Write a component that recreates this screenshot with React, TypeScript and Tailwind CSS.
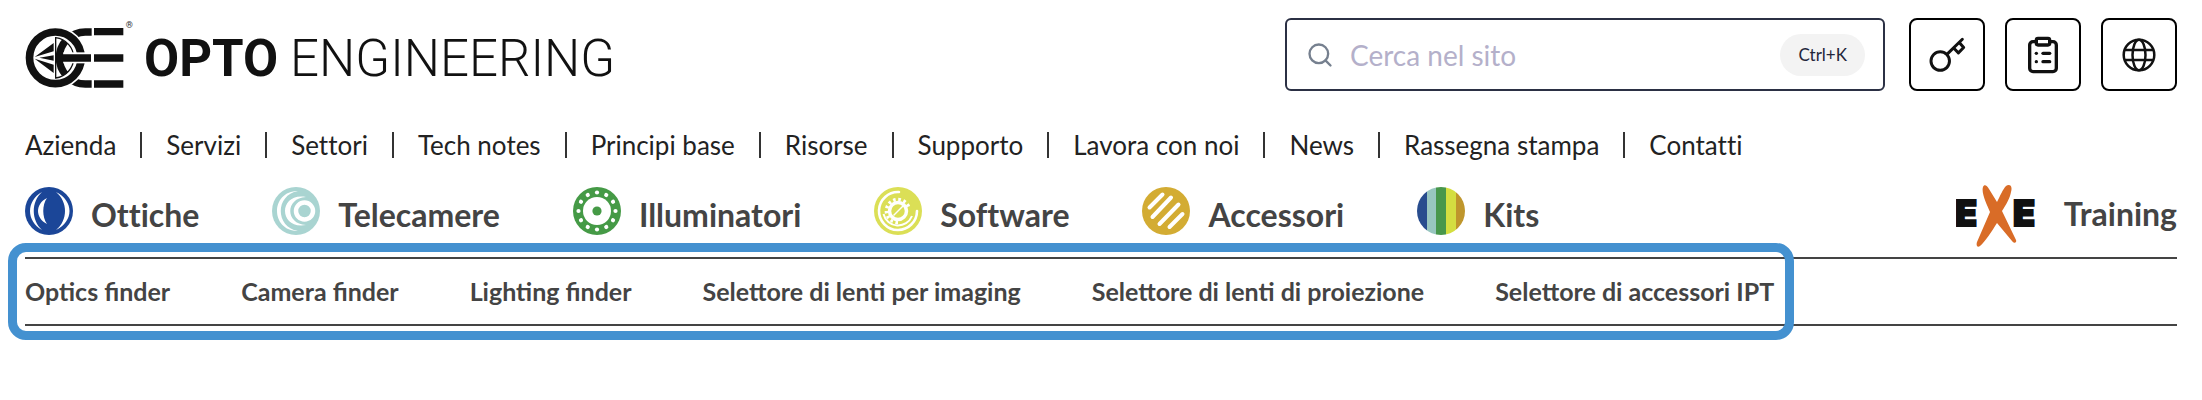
import React from 'react';
import { Search, ClipboardList } from 'lucide-react';

const LogoMark = () => (
  <svg viewBox="45 30 327 210" className="w-[109px] h-[70px]" aria-hidden="true">
    <defs>
      <clipPath id="lens">
        <path d="M137 83A62 61 0 0 1 137 204Z" />
      </clipPath>
    </defs>
    <path d="M245 66H226A78 78 0 0 0 226 222H245" fill="none" stroke="#111" strokeWidth="22" />
    <circle cx="136" cy="143.5" r="94" fill="#fff" />
    <circle cx="136" cy="143.5" r="77.5" fill="#fff" stroke="#111" strokeWidth="23" />
    <path d="M74 141 131 99V124ZM88 143.5 131 136V152ZM74 146 131 189V164Z" fill="#111" />
    <g clipPath="url(#lens)">
      <circle cx="226" cy="143.5" r="78" fill="none" stroke="#111" strokeWidth="22" />
    </g>
    <path d="M137 83A62 61 0 0 1 137 204Z" fill="none" stroke="#111" strokeWidth="4" />
    <path d="M160 127H250V160H160Z" fill="#fff" />
    <path d="M139 133H243V155H139ZM252 133H340V155H252ZM252 54H340V76H252ZM252 211H340V233H252Z" fill="#111" />
    <text x="347" y="53" fontSize="27" fontFamily="Roboto" fill="#333">®</text>
  </svg>
);

const KeyIcon = () => (
  <svg viewBox="110 108 112 106" className="w-[37px] h-[35px]" fill="none" stroke="currentColor" strokeWidth="9" strokeLinecap="round" strokeLinejoin="round">
    <circle cx="144" cy="181" r="28" />
    <path d="M165 160 211 115M186 143 199 156 215 140 203 126" />
  </svg>
);

const GlobeIcon = () => (
  <svg viewBox="0 0 34 34" className="w-[34px] h-[34px]" fill="none" stroke="currentColor" strokeWidth="2.5">
    <circle cx="17" cy="17" r="15.3" />
    <ellipse cx="17" cy="17" rx="6.5" ry="15.3" />
    <path d="M2 12H32M2 22H32" />
  </svg>
);

const OpticsIcon = () => (
  <svg viewBox="0 0 48 48" className="w-12 h-12">
    <circle cx="24" cy="24" r="24" fill="#1b4698" />
    <path
      d="M17 5C1 14 1 34 17 43C6 33 6 15 17 5ZM22 11C10 17 10 31 22 37C17 30 17 18 22 11ZM31 5C49 14 49 34 31 43C43 33 43 15 31 5Z"
      fill="#fff"
    />
  </svg>
);

const CameraIcon = () => (
  <svg viewBox="0 0 48 48" className="w-12 h-12">
    <circle cx="24" cy="24" r="24" fill="#a9d4d1" />
    <path d="M26 4C-2 4 -2 44 26 44C3 40 3 8 26 4ZM34 10C6 5 6 43 34 38C13 37 13 11 34 10Z" fill="#fff" />
    <circle cx="32.5" cy="24" r="8.5" fill="#a9d4d1" stroke="#fff" strokeWidth="4.5" />
  </svg>
);

const LightIcon = () => (
  <svg viewBox="0 0 48 48" className="w-12 h-12">
    <circle cx="24" cy="24" r="24" fill="#459a46" />
    <circle cx="24" cy="24" r="14" fill="#fff" />
    <circle cx="24" cy="24" r="4.6" fill="#459a46" />
    {Array.from({ length: 12 }, (_, i) => (
      <circle key={i} cx="24" cy="5.5" r="2.1" fill="#fff" transform={`rotate(${i * 30} 24 24)`} />
    ))}
  </svg>
);

const SoftwareIcon = () => (
  <svg viewBox="0 0 48 48" className="w-12 h-12" fill="none" stroke="#fff">
    <circle cx="24" cy="24" r="24" fill="#dbdf56" stroke="none" />
    <path d="M25 5A19 19 0 1 0 43 24" strokeWidth="2.6" strokeLinecap="round" />
    <path d="M9.5 27A15 15 0 0 0 38 29" strokeWidth="2" />
    <circle cx="24" cy="24" r="8.5" strokeWidth="3.5" />
    <path d="M24 35.5A11.5 11.5 0 1 1 35 21" strokeWidth="3.5" strokeDasharray="2.6 2.6" />
    <path d="M19.5 28.5 29 19" strokeWidth="1.5" />
  </svg>
);

const AccessoryIcon = () => (
  <svg viewBox="0 0 48 48" className="w-12 h-12">
    <circle cx="24" cy="24" r="24" fill="#d3ac33" />
    <path
      d="M7.5 20.5 20.5 7.5M10.5 30 29 10.5M17.5 37 36.5 17.5M27.5 40 40.5 27"
      stroke="#fff"
      strokeWidth="4"
      strokeLinecap="round"
    />
  </svg>
);

const KitsIcon = () => (
  <span className="flex w-12 h-12 rounded-full overflow-hidden">
    <span className="flex-1 bg-[#284c8e]"></span>
    <span className="flex-1 bg-[#98c6bf]"></span>
    <span className="flex-1 bg-[#48974b]"></span>
    <span className="flex-1 bg-[#d4de40]"></span>
    <span className="flex-1 bg-[#bf962c]"></span>
  </span>
);

const ExeLogo = () => (
  <svg viewBox="0 0 82 62" className="w-[82px] h-[62px]" aria-hidden="true">
    <g fontFamily="Inter" fontWeight="900" fontSize="36" fill="#111" stroke="#111" strokeWidth="2">
      <text x="-1" y="41">E</text>
      <text x="57" y="41">E</text>
    </g>
    <path
      d="M27 2C28 -1 31 0 33 4L41 17C44 11 47 4 50 1C53 -1 57 0 55 7C54 13 50 20 46 26L60 55C61 58 58 59 56 56L41 38C36 46 29 57 24 61C21 63 20 60 21 57L34 27C31 20 25 8 27 2Z"
      fill="#d96c27"
    />
  </svg>
);

const pages = [
  'Azienda',
  'Servizi',
  'Settori',
  'Tech notes',
  'Principi base',
  'Risorse',
  'Supporto',
  'Lavora con noi',
  'News',
  'Rassegna stampa',
  'Contatti'
];

const categories = [
  { icon: OpticsIcon, title: 'Ottiche' },
  { icon: CameraIcon, title: 'Telecamere' },
  { icon: LightIcon, title: 'Illuminatori' },
  { icon: SoftwareIcon, title: 'Software' },
  { icon: AccessoryIcon, title: 'Accessori' },
  { icon: KitsIcon, title: 'Kits' }
];

const finders = [
  'Optics finder',
  'Camera finder',
  'Lighting finder',
  'Selettore di lenti per imaging',
  'Selettore di lenti di proiezione',
  'Selettore di accessori IPT'
];

const actions = [
  { label: 'Accedi', icon: <KeyIcon /> },
  { label: 'Lista', icon: <ClipboardList size={40} /> },
  { label: 'Lingua', icon: <GlobeIcon /> }
];

const App = () => {
  return (
    <header className="bg-white px-[25px] pt-[18px] pb-10 font-[Lato,sans-serif] whitespace-nowrap">
      <div className="flex items-center justify-between">
        <a href="#" className="flex items-center h-[73px] text-[#111] font-[Roboto,sans-serif] text-[51px] leading-[60px]">
          <LogoMark />
          <span className="ml-[10px] pt-2 font-bold">OPTO</span>
          <span className="ml-3 pt-2 font-light">ENGINEERING</span>
        </a>

        <div className="flex items-center gap-5">
          <form className="flex items-center w-[600px] h-[73px] mr-1 pl-[19px] pr-[18px] border-2 border-[#2b3044] rounded-md">
            <Search size={28} strokeWidth={2} className="text-[#76808f]" />
            <input
              type="text"
              aria-label="Cerca nel sito"
              placeholder="Cerca nel sito"
              className="flex-1 min-w-0 ml-4 text-[28px] leading-[40px] outline-none placeholder:text-[#b4b0ca]"
            />
            <kbd className="px-[18px] rounded-full bg-[#f3f3f3] font-[Lato,sans-serif] text-[17px] leading-[42px] text-[#23263b]">
              Ctrl+K
            </kbd>
          </form>
          {actions.map((action) => (
            <button
              key={action.label}
              type="button"
              aria-label={action.label}
              className="flex items-center justify-center w-[76px] h-[73px] border-2 border-black rounded-lg text-[#111]"
            >
              {action.icon}
            </button>
          ))}
        </div>
      </div>

      <ul className="flex items-center mt-[34px] text-[26px] leading-[40px] text-[#222] [font-variant-ligatures:none]">
        {pages.map((page, index) => (
          <li key={page} className="flex items-center">
            {index > 0 && <span className="w-[2px] h-[26px] mx-6 bg-[#333]"></span>}
            <a href="#">{page}</a>
          </li>
        ))}
      </ul>

      <div className="flex items-start justify-between mt-5 text-[32px] leading-[40px] font-bold text-[#444] [font-variant-ligatures:none]">
        <ul className="flex items-center gap-[73px] pt-[2px]">
          {categories.map((category) => {
            const Icon = category.icon;
            return (
              <li key={category.title}>
                <a href="#" className="flex items-center gap-[18px]">
                  <Icon />
                  <span className="pt-2">{category.title}</span>
                </a>
              </li>
            );
          })}
        </ul>
        <a href="#" className="flex items-center gap-[26px]">
          <ExeLogo />
          <span className="pb-1">Training</span>
        </a>
      </div>

      <nav className="mt-[10px] border-y-2 border-[#444]">
        <div className="relative w-fit">
          <ul className="flex gap-[71px] text-[25px] leading-[65px] font-bold text-[#444]">
            {finders.map((finder) => (
              <li key={finder}>
                <a href="#">{finder}</a>
              </li>
            ))}
          </ul>
          <div className="absolute -inset-y-4 -left-[17px] -right-5 border-[9px] border-[#4491d0] rounded-[18px] pointer-events-none"></div>
        </div>
      </nav>
    </header>
  );
};

export default App;
